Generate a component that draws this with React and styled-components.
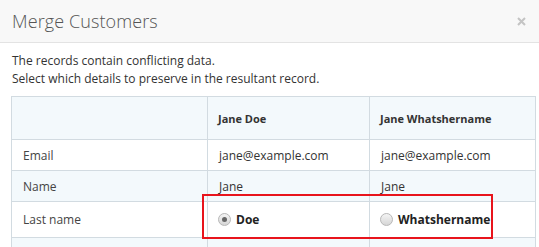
import styled, { createGlobalStyle } from "styled-components";

const GlobalStyle = createGlobalStyle`
  html, body {
    margin: 0;
    padding: 0;
    background: #fff;
    font-family: "Open Sans", "Liberation Sans", sans-serif;
    color: #333;
  }
`;

const Dialog = styled.div`
  width: 539px;
  background: #fff;
`;

const Header = styled.div`
  display: flex;
  align-items: center;
  justify-content: space-between;
  height: 43px;
  padding: 0 12px 0 12px;
  box-sizing: border-box;
  background: #f8f8f8;
  border-bottom: 1px solid #e3e3e3;
`;

const Title = styled.h3`
  margin: 0;
  font-size: 18px;
  font-weight: 300;
  color: #555;
  letter-spacing: 0.1px;
`;

const Close = styled.button`
  border: 0;
  background: none;
  padding: 0;
  margin-right: 1px;
  display: flex;
  cursor: pointer;
`;

const Body = styled.div`
  padding: 9px 5px 0 11px;
`;

const Intro = styled.p`
  margin: 0 0 8px 1px;
  font-size: 12px;
  line-height: 18px;
  color: #333;
`;

const TableWrap = styled.div`
  position: relative;
`;

const Table = styled.table`
  width: 524px;
  border-collapse: collapse;
  table-layout: fixed;
  font-size: 12px;
`;

const Row = styled.tr`
  background: ${(p) => (p.$shaded ? "#f3f9fc" : "#fff")};
`;

const Cell = styled.td`
  border: 1px solid #d2dbe1;
  padding: 0 10px 0 11px;
  height: ${(p) => p.$h}px;
  box-sizing: border-box;
  vertical-align: middle;
  color: ${(p) => (p.$label ? "#444" : "#333")};
`;

const HeadCell = styled.th`
  border: 1px solid #d2dbe1;
  padding: 0 10px;
  height: 42px;
  text-align: left;
  font-size: 11px;
  font-weight: 700;
  color: #333;
`;

const Choice = styled.label`
  display: flex;
  align-items: center;
  gap: 5px;
  margin-left: -1px;
  font-weight: 700;
  font-size: 12px;
  color: #222;
`;

const Radio = styled.span`
  width: 11px;
  height: 11px;
  border-radius: 50%;
  border: 1px solid #b8b8b8;
  background: linear-gradient(#f4f4f4, #d6d6d6);
  display: flex;
  align-items: center;
  justify-content: center;
  &::after {
    content: "";
    width: 5px;
    height: 5px;
    border-radius: 50%;
    background: ${(p) => (p.$checked ? "#666" : "transparent")};
  }
`;

const Highlight = styled.div`
  position: absolute;
  left: 191px;
  top: 98px;
  width: 291px;
  height: 45px;
  border: 2px solid #e8141c;
  box-sizing: border-box;
  pointer-events: none;
`;

const rows = [
  { label: "Email", a: "jane@example.com", b: "jane@example.com", h: 31 },
  { label: "Name", a: "Jane", b: "Jane", h: 31, shaded: true },
];

export default function App() {
  return (
    <>
      <GlobalStyle />
      <Dialog>
        <Header>
          <Title>Merge Customers</Title>
          <Close aria-label="Close">
            <svg width="9" height="9" viewBox="0 0 9 9">
              <path d="M1 1L8 8M8 1L1 8" stroke="#c4c4c4" strokeWidth="2" />
            </svg>
          </Close>
        </Header>
        <Body>
          <Intro>
            The records contain conflicting data.
            <br />
            Select which details to preserve in the resultant record.
          </Intro>
          <TableWrap>
            <Table>
              <colgroup>
                <col style={{ width: 196 }} />
                <col style={{ width: 162 }} />
                <col style={{ width: 166 }} />
              </colgroup>
              <thead>
                <Row $shaded>
                  <HeadCell />
                  <HeadCell>Jane Doe</HeadCell>
                  <HeadCell>Jane Whatshername</HeadCell>
                </Row>
              </thead>
              <tbody>
                {rows.map((r) => (
                  <Row key={r.label} $shaded={r.shaded}>
                    <Cell $h={r.h} $label>{r.label}</Cell>
                    <Cell $h={r.h}>{r.a}</Cell>
                    <Cell $h={r.h}>{r.b}</Cell>
                  </Row>
                ))}
                <Row>
                  <Cell $h={36} $label>Last name</Cell>
                  <Cell $h={36}>
                    <Choice>
                      <Radio $checked />
                      Doe
                    </Choice>
                  </Cell>
                  <Cell $h={36}>
                    <Choice>
                      <Radio />
                      Whatshername
                    </Choice>
                  </Cell>
                </Row>
                <Row $shaded>
                  <Cell $h={10} />
                  <Cell $h={10} />
                  <Cell $h={10} />
                </Row>
              </tbody>
            </Table>
            <Highlight />
          </TableWrap>
        </Body>
      </Dialog>
    </>
  );
}
